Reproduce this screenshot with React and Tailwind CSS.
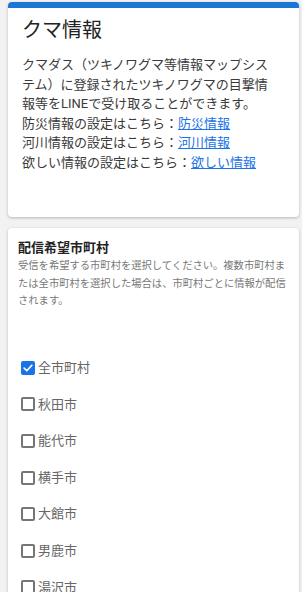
import React from 'react';

const cities = ['秋田市', '能代市', '横手市', '大館市', '男鹿市', '湯沢市', '鹿角市'];

const Checkbox = ({ checked }) => {
  if (checked) {
    return (
      <span className="flex items-center justify-center w-[14px] h-[14px] rounded-[2px] bg-[#1a73e8]">
        <svg viewBox="0 0 14 14" className="w-[12px] h-[12px]">
          <path d="M2.5 7.2 L5.6 10.2 L11.5 3.8" fill="none" stroke="#fff" strokeWidth="2" strokeLinecap="round" strokeLinejoin="round" />
        </svg>
      </span>
    );
  }
  return <span className="block w-[14px] h-[14px] rounded-[2px] border-2 border-[#767676]" />;
};

const App = () => {
  return (
    <div
      className="h-[592px] overflow-hidden bg-[#f2f2f2] pt-[2px]"
      style={{ fontFamily: 'Roboto, "Noto Sans CJK JP", sans-serif' }}
    >
      {/* Bear info card */}
      <div className="ml-2 mr-[3px] bg-white rounded-[4px] overflow-hidden shadow-[0_1px_3px_rgba(0,0,0,0.25)]">
        <div className="h-[6px] bg-[#1976d2]" />
        <div className="px-[14px] pt-[8px] pb-[45px]">
          <h1 className="text-[20px] leading-[28px] font-normal text-[#222]">クマ情報</h1>
          <div className="mt-[11px] w-[252px] text-[13px] leading-[19.5px] text-[#3a3a3a]">
            <p>クマダス（ツキノワグマ等情報マップシステム）に登録されたツキノワグマの目撃情報等をLINEで受け取ることができます。</p>
            <p>
              防災情報の設定はこちら：<a href="#" className="text-[#1a73e8] underline">防災情報</a>
            </p>
            <p>
              河川情報の設定はこちら：<a href="#" className="text-[#1a73e8] underline">河川情報</a>
            </p>
            <p>
              欲しい情報の設定はこちら：<a href="#" className="text-[#1a73e8] underline">欲しい情報</a>
            </p>
          </div>
        </div>
      </div>

      {/* Municipality selection */}
      <div className="ml-2 mr-[3px] mt-[11px] bg-white rounded-[4px] shadow-[0_1px_3px_rgba(0,0,0,0.25)] px-[10px] pt-[11px] pb-4">
        <h2 className="text-[13px] leading-[18px] font-bold text-[#222]">配信希望市町村</h2>
        <p className="text-[10.3px] leading-[17.5px] text-[#777]">
          受信を希望する市町村を選択してください。複数市町村または全市町村を選択した場合は、市町村ごとに情報が配信されます。
        </p>
        <div className="mt-[40px] flex flex-col">
          {[{ name: '全市町村', checked: true }, ...cities.map((name) => ({ name, checked: false }))].map((c) => (
            <label key={c.name} className="flex items-center h-[36.6px] pl-[3px]">
              <Checkbox checked={c.checked} />
              <span className="ml-[3px] text-[13px] text-[#666]">{c.name}</span>
            </label>
          ))}
        </div>
      </div>
    </div>
  );
};

export default App;
